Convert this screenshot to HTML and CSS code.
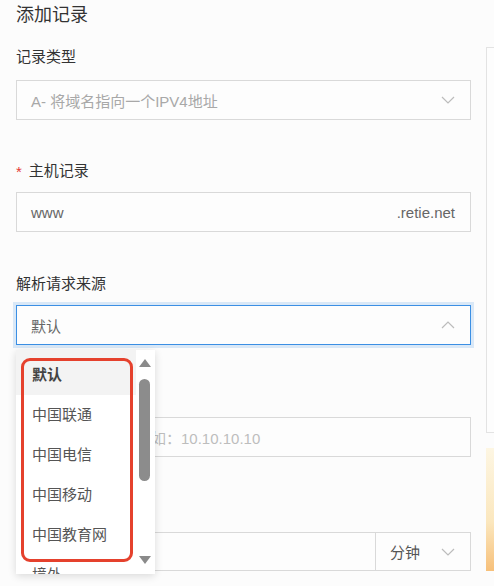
FILE: index.html
```html
<!DOCTYPE html>
<html lang="zh-CN">
<head>
<meta charset="utf-8">
<title>添加记录</title>
<link rel="stylesheet" href="styles.css">
</head>
<body>
<div class="page">
  <main class="form">
    <h1 class="title">添加记录</h1>

    <div class="field field-first">
      <div class="label">记录类型</div>
      <div class="control select">
        <span class="value muted">A- 将域名指向一个IPV4地址</span>
        <svg class="chev" viewBox="0 0 14 8"><polyline points="1,1 7,7 13,1"/></svg>
      </div>
    </div>

    <div class="field">
      <div class="label"><span class="req">*</span>主机记录</div>
      <div class="control input">
        <span class="value">www</span>
        <span class="suffix">.retie.net</span>
      </div>
    </div>

    <div class="field field-source">
      <div class="label">解析请求来源</div>
      <div class="select-wrap">
        <div class="control select focused">
          <span class="value">默认</span>
          <svg class="chev" viewBox="0 0 14 8"><polyline points="1,7 7,1 13,7"/></svg>
        </div>
        <div class="dropdown">
          <ul class="options">
            <li class="option active">默认</li>
            <li class="option">中国联通</li>
            <li class="option">中国电信</li>
            <li class="option">中国移动</li>
            <li class="option">中国教育网</li>
            <li class="option">境外</li>
          </ul>
          <div class="scrollbar">
            <svg class="arrow" viewBox="0 0 12 8"><polygon points="0,8 6,0 12,8"/></svg>
            <div class="thumb"></div>
            <svg class="arrow arrow-down" viewBox="0 0 12 8"><polygon points="0,0 12,0 6,8"/></svg>
          </div>
          <div class="highlight"></div>
        </div>
      </div>
    </div>

    <div class="field">
      <div class="label covered"><span class="req">*</span>记录值</div>
      <div class="control input">
        <span class="placeholder">请输入记录值，例如：10.10.10.10</span>
      </div>
    </div>

    <div class="field field-ttl">
      <div class="label covered"><span class="req">*</span>TTL</div>
      <div class="ttl-row">
        <div class="control input ttl-input"></div>
        <div class="control select unit">
          <span class="value">分钟</span>
          <svg class="chev" viewBox="0 0 14 8"><polyline points="1,1 7,7 13,1"/></svg>
        </div>
      </div>
    </div>
  </main>

  <aside class="side">
    <div class="panel"></div>
    <div class="banner"></div>
  </aside>
</div>
</body>
</html>
```

FILE: styles.css
```css
* { box-sizing: border-box; }

html, body {
  margin: 0;
  padding: 0;
}

body {
  background: #fcfcfc;
  font-family: "Liberation Sans", "Noto Sans CJK SC", sans-serif;
  font-size: 15px;
  color: #333;
  overflow: hidden;
  width: 494px;
  height: 586px;
}

.page {
  display: flex;
  align-items: flex-start;
}

.form {
  width: 455px;
  margin-left: 16px;
  flex: none;
}

.title {
  margin: 0;
  height: 47px;
  padding-top: 1px;
  font-size: 18px;
  line-height: 28px;
  font-weight: normal;
  color: #333;
}

.field + .field { margin-top: 41px; }
.field + .field-source { margin-top: 42px; }
.field + .field-ttl { margin-top: 44px; }

.label {
  height: 20px;
  line-height: 20px;
  margin-bottom: 11px;
  color: #333;
  display: flex;
  align-items: center;
}

.label.covered { visibility: hidden; }

.field-first .label { margin-bottom: 13px; }

.req {
  color: #e53935;
  margin-right: 7px;
  position: relative;
  top: 1px;
}

.control {
  height: 40px;
  border: 1px solid #d9d9d9;
  background: #fdfdfd;
  display: flex;
  align-items: center;
  justify-content: space-between;
  padding: 0 15px 0 14px;
  color: #666;
}

.value { white-space: nowrap; }
.muted { color: #a8a8a8; }
.suffix { color: #666; }
.placeholder { color: #bdbdbd; white-space: nowrap; }

.chev {
  width: 14px;
  height: 8px;
  flex: none;
}
.chev polyline {
  fill: none;
  stroke: #bcbcbc;
  stroke-width: 1.2;
}

.focused {
  border-color: #3b8fe4;
  box-shadow: 0 0 0 3px rgba(59, 143, 228, 0.18);
}

.select-wrap { position: relative; }

.dropdown {
  position: absolute;
  top: 45px;
  left: 0;
  width: 139px;
  height: 224px;
  background: #fff;
  box-shadow: 0 2px 8px rgba(0, 0, 0, 0.14);
  display: flex;
  overflow: hidden;
  z-index: 10;
}

.options {
  list-style: none;
  margin: 0;
  padding: 0;
  flex: 1;
}

.option {
  height: 40px;
  line-height: 40px;
  padding-left: 16px;
  color: #555;
  white-space: nowrap;
}

.option.active {
  height: 45px;
  padding-top: 5px;
  background: #f3f3f3;
  font-weight: bold;
  color: #444;
}

.scrollbar {
  width: 17px;
  margin-right: 2px;
  flex: none;
  display: flex;
  flex-direction: column;
  align-items: center;
  padding: 9px 0 10px;
}

.arrow {
  width: 12px;
  height: 8px;
  flex: none;
}
.arrow polygon { fill: #8a8a8a; }

.thumb {
  width: 11px;
  height: 102px;
  margin-top: 12px;
  border-radius: 6px;
  background: #8c8c8c;
}

.arrow-down { margin-top: auto; }

.highlight {
  position: absolute;
  left: 5px;
  top: 8px;
  width: 112px;
  height: 204px;
  border: 3px solid #e5412d;
  border-radius: 9px;
  pointer-events: none;
}

.ttl-row { display: flex; }
.ttl-row .control { height: 39px; }
.ttl-input { flex: 1; }
.unit {
  width: 95px;
  flex: none;
  border-left: none;
  justify-content: flex-start;
}
.unit .value { color: #555; margin-right: auto; }

.side {
  flex: 1;
  margin-left: 15px;
  min-width: 0;
}

.panel {
  margin-top: 47px;
  height: 386px;
  border: 1px solid #e3e3e3;
  border-right: none;
  background: #fdfdfd;
}

.banner {
  margin-top: 15px;
  height: 123px;
  background: linear-gradient(to bottom, #fdf6e3 0%, #fbe7be 60%, #f7c07a 100%);
}
```
